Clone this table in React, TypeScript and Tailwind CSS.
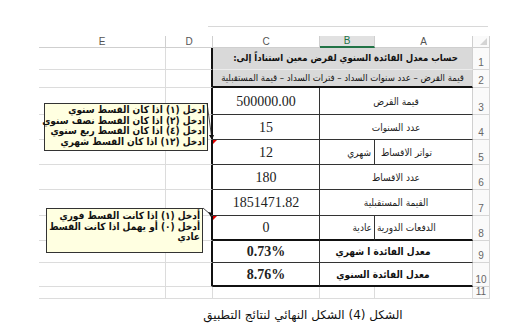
import React from "react";

function RowNum({ n }: { n: number }) {
  return (
    <div className="flex items-end justify-center border-r border-b border-[#d6d6d6] bg-[#fafafa] pb-[1px] font-['Liberation_Sans',Arial,sans-serif] text-[10px] leading-[11px] text-[#666]">
      {n}
    </div>
  );
}

function Blank() {
  return <div />;
}

function E() {
  return <div className="border-r border-b border-[#dcdcdc]" />;
}

function D() {
  return <div className="border-b border-r-2 border-b-[#dcdcdc] border-r-[#111]" />;
}

function Num({ v, bold = false, thick = false }: { v: string; bold?: boolean; thick?: boolean }) {
  return (
    <div
      className={
        "flex items-center justify-center border-r border-r-[#333] font-['Liberation_Serif',serif] text-[14px] text-[#222] " +
        (thick ? "border-b-2 border-b-[#111] " : "border-b border-b-[#333] ") +
        (bold ? "font-bold" : "")
      }
    >
      {v}
    </div>
  );
}

function Label({ text, thick = false, bold = false, shift = false }: { text: string; thick?: boolean; bold?: boolean; shift?: boolean }) {
  return (
    <div
      dir="rtl"
      className={
        "col-span-2 flex items-center justify-center whitespace-nowrap border-r border-r-[#d0d0d0] font-['DejaVu_Sans_Condensed','DejaVu_Sans',sans-serif] text-[10px] " +
        (thick ? "border-b-2 border-b-[#111] " : "border-b border-b-[#333] ") +
        (bold ? "font-bold text-[#111] " : "text-[#222] ") +
        (shift ? "pr-[26px]" : "")
      }
    >
      {text}
    </div>
  );
}

const hdr = "flex items-center justify-center border-r border-b border-[#cfcfcf] font-['Liberation_Sans',Arial,sans-serif] text-[10px] leading-[10px] text-[#555]";

export default function App() {
  return (
    <div className="relative h-[334px] w-[514px] overflow-hidden bg-white">
      <div className="h-[26px]" />
      <div className="ml-[208px] h-px w-[280px] bg-[#d8d8d8]" />
      <div className="h-[9px]" />
      <div className="grid w-[490px] grid-cols-[39px_127px_47px_107px_55px_98px_17px] grid-rows-[12px_22px_18px_27px_25px_25px_25px_26px_25px_22px_24px_12px]">
        {/* header */}
        <Blank />
        <div className={hdr}>E</div>
        <div className={hdr}>D</div>
        <div className={hdr}>C</div>
        <div className="flex items-center justify-center border-r border-b-2 border-r-[#cfcfcf] border-b-[#217346] bg-[#e1e1e1] font-['Liberation_Sans',Arial,sans-serif] text-[10px] leading-[10px] text-[#217346]">B</div>
        <div className={hdr}>A</div>
        <div className="relative border-r border-b border-[#cfcfcf] bg-[#fafafa]">
          <div className="absolute right-[2px] bottom-[2px] h-0 w-0 border-b-[7px] border-l-[7px] border-b-[#d4d4d4] border-l-transparent" />
        </div>

        {/* row 1 */}
        <Blank />
        <E />
        <D />
        <div dir="rtl" className="col-span-3 flex items-center justify-center whitespace-nowrap border-r border-b border-r-[#d0d0d0] border-b-[#ececec] bg-[#d9d9d9] pl-[6px] font-['DejaVu_Sans_Condensed','DejaVu_Sans',sans-serif] text-[9.5px] font-bold text-[#111]">
          حساب معدل الفائدة السنوي لقرض معين استناداً إلى:
        </div>
        <RowNum n={1} />

        {/* row 2 */}
        <Blank />
        <E />
        <D />
        <div dir="rtl" className="col-span-3 flex items-center justify-center whitespace-nowrap border-r border-b-2 border-r-[#d0d0d0] border-b-[#111] bg-[#d9d9d9] font-['DejaVu_Sans_Condensed','DejaVu_Sans',sans-serif] text-[9.5px] text-[#111]">
          قيمة القرض – عدد سنوات السداد – فترات السداد – قيمة المستقبلية
        </div>
        <RowNum n={2} />

        {/* row 3 */}
        <Blank />
        <E />
        <D />
        <Num v="500000.00" />
        <Label text="قيمة القرض" />
        <RowNum n={3} />

        {/* row 4 */}
        <Blank />
        <E />
        <D />
        <Num v="15" />
        <Label text="عدد السنوات" />
        <RowNum n={4} />

        {/* row 5 */}
        <Blank />
        <E />
        <D />
        <Num v="12" />
        <div dir="rtl" className="flex items-center justify-start border-r border-b border-r-[#333] border-b-[#333] pr-[3px] font-['DejaVu_Sans_Condensed','DejaVu_Sans',sans-serif] text-[10px] text-[#222]">شهري</div>
        <div dir="rtl" className="flex items-center justify-end whitespace-nowrap border-r border-b border-r-[#d0d0d0] border-b-[#333] pl-[6px] font-['DejaVu_Sans_Condensed','DejaVu_Sans',sans-serif] text-[10px] text-[#222]">تواتر الاقساط</div>
        <RowNum n={5} />

        {/* row 6 */}
        <Blank />
        <E />
        <D />
        <Num v="180" />
        <Label text="عدد الاقساط" />
        <RowNum n={6} />

        {/* row 7 */}
        <Blank />
        <E />
        <D />
        <Num v="1851471.82" />
        <Label text="القيمة المستقبلية" />
        <RowNum n={7} />

        {/* row 8 */}
        <Blank />
        <E />
        <D />
        <Num v="0" thick />
        <div dir="rtl" className="flex items-center justify-start border-r border-b-2 border-r-[#333] border-b-[#111] pr-[2px] font-['DejaVu_Sans_Condensed','DejaVu_Sans',sans-serif] text-[10px] text-[#222]">عادية</div>
        <div dir="rtl" className="flex items-center justify-end whitespace-nowrap border-r border-b-2 border-r-[#d0d0d0] border-b-[#111] pl-[2px] font-['DejaVu_Sans_Condensed','DejaVu_Sans',sans-serif] text-[10px] text-[#222]">الدفعات الدورية</div>
        <RowNum n={8} />

        {/* row 9 */}
        <Blank />
        <E />
        <D />
        <Num v="0.73%" bold />
        <Label text="معدل الفائدة ا شهري" bold shift />
        <RowNum n={9} />

        {/* row 10 */}
        <Blank />
        <E />
        <D />
        <Num v="8.76%" bold thick />
        <Label text="معدل الفائدة  السنوي" bold shift thick />
        <RowNum n={10} />

        {/* row 11 */}
        <Blank />
        <E />
        <div className="border-r border-b border-[#dcdcdc]" />
        <div className="border-r border-b border-[#dcdcdc]" />
        <div className="border-r border-b border-[#dcdcdc]" />
        <div className="border-r border-b border-[#dcdcdc]" />
        <RowNum n={11} />
      </div>

      <div dir="rtl" className="mt-[8px] ml-[190px] w-[226px] whitespace-nowrap text-center font-['DejaVu_Sans',sans-serif] text-[12px] leading-[16px] text-[#111]">
        الشكل (4) الشكل النهائي لنتائج التطبيق
      </div>

      {/* callout 1 */}
      <div
        dir="rtl"
        className="absolute top-[103px] left-[44px] h-[48px] w-[164px] whitespace-nowrap border border-[#333] bg-[#ffffe1] pt-[1px] pr-[2px] font-['DejaVu_Sans_Condensed','DejaVu_Sans',sans-serif] text-[10px] leading-[10.5px] font-bold text-[#111]"
      >
        <div>ادخل (١) اذا كان القسط سنوي</div>
        <div>ادخل (٢) اذا كان القسط نصف سنوي</div>
        <div>ادخل (٤) اذا كان القسط ربع سنوي</div>
        <div>ادخل (١٢) اذا كان القسط شهري</div>
      </div>

      {/* callout 2 */}
      <div
        dir="rtl"
        className="absolute top-[208px] left-[46px] h-[45px] w-[157px] whitespace-nowrap border border-[#333] bg-[#ffffe1] pt-[2px] pr-[2px] font-['DejaVu_Sans_Condensed','DejaVu_Sans',sans-serif] text-[10px] leading-[10.5px] font-bold text-[#111]"
      >
        <div>أدخل (١) اذا كانت القسط  فوري</div>
        <div>أدخل (٠) أو يهمل اذا كانت القسط</div>
        <div>عادي</div>
      </div>

      {/* leader lines and comment markers */}
      <svg className="absolute top-0 left-0" width="514" height="334" viewBox="0 0 514 334">
        <line x1="207" y1="103" x2="211.5" y2="136" stroke="#222" strokeWidth="0.8" />
        <polygon points="209,135 214,135 212,140" fill="#111" />
        <polygon points="213,140 217,140 213,144" fill="#e00000" />
        <line x1="203" y1="208" x2="210" y2="214" stroke="#222" strokeWidth="0.8" />
        <polygon points="208,212 213,213 211,217" fill="#111" />
        <polygon points="213,216 217,216 213,220" fill="#e00000" />
      </svg>
    </div>
  );
}
